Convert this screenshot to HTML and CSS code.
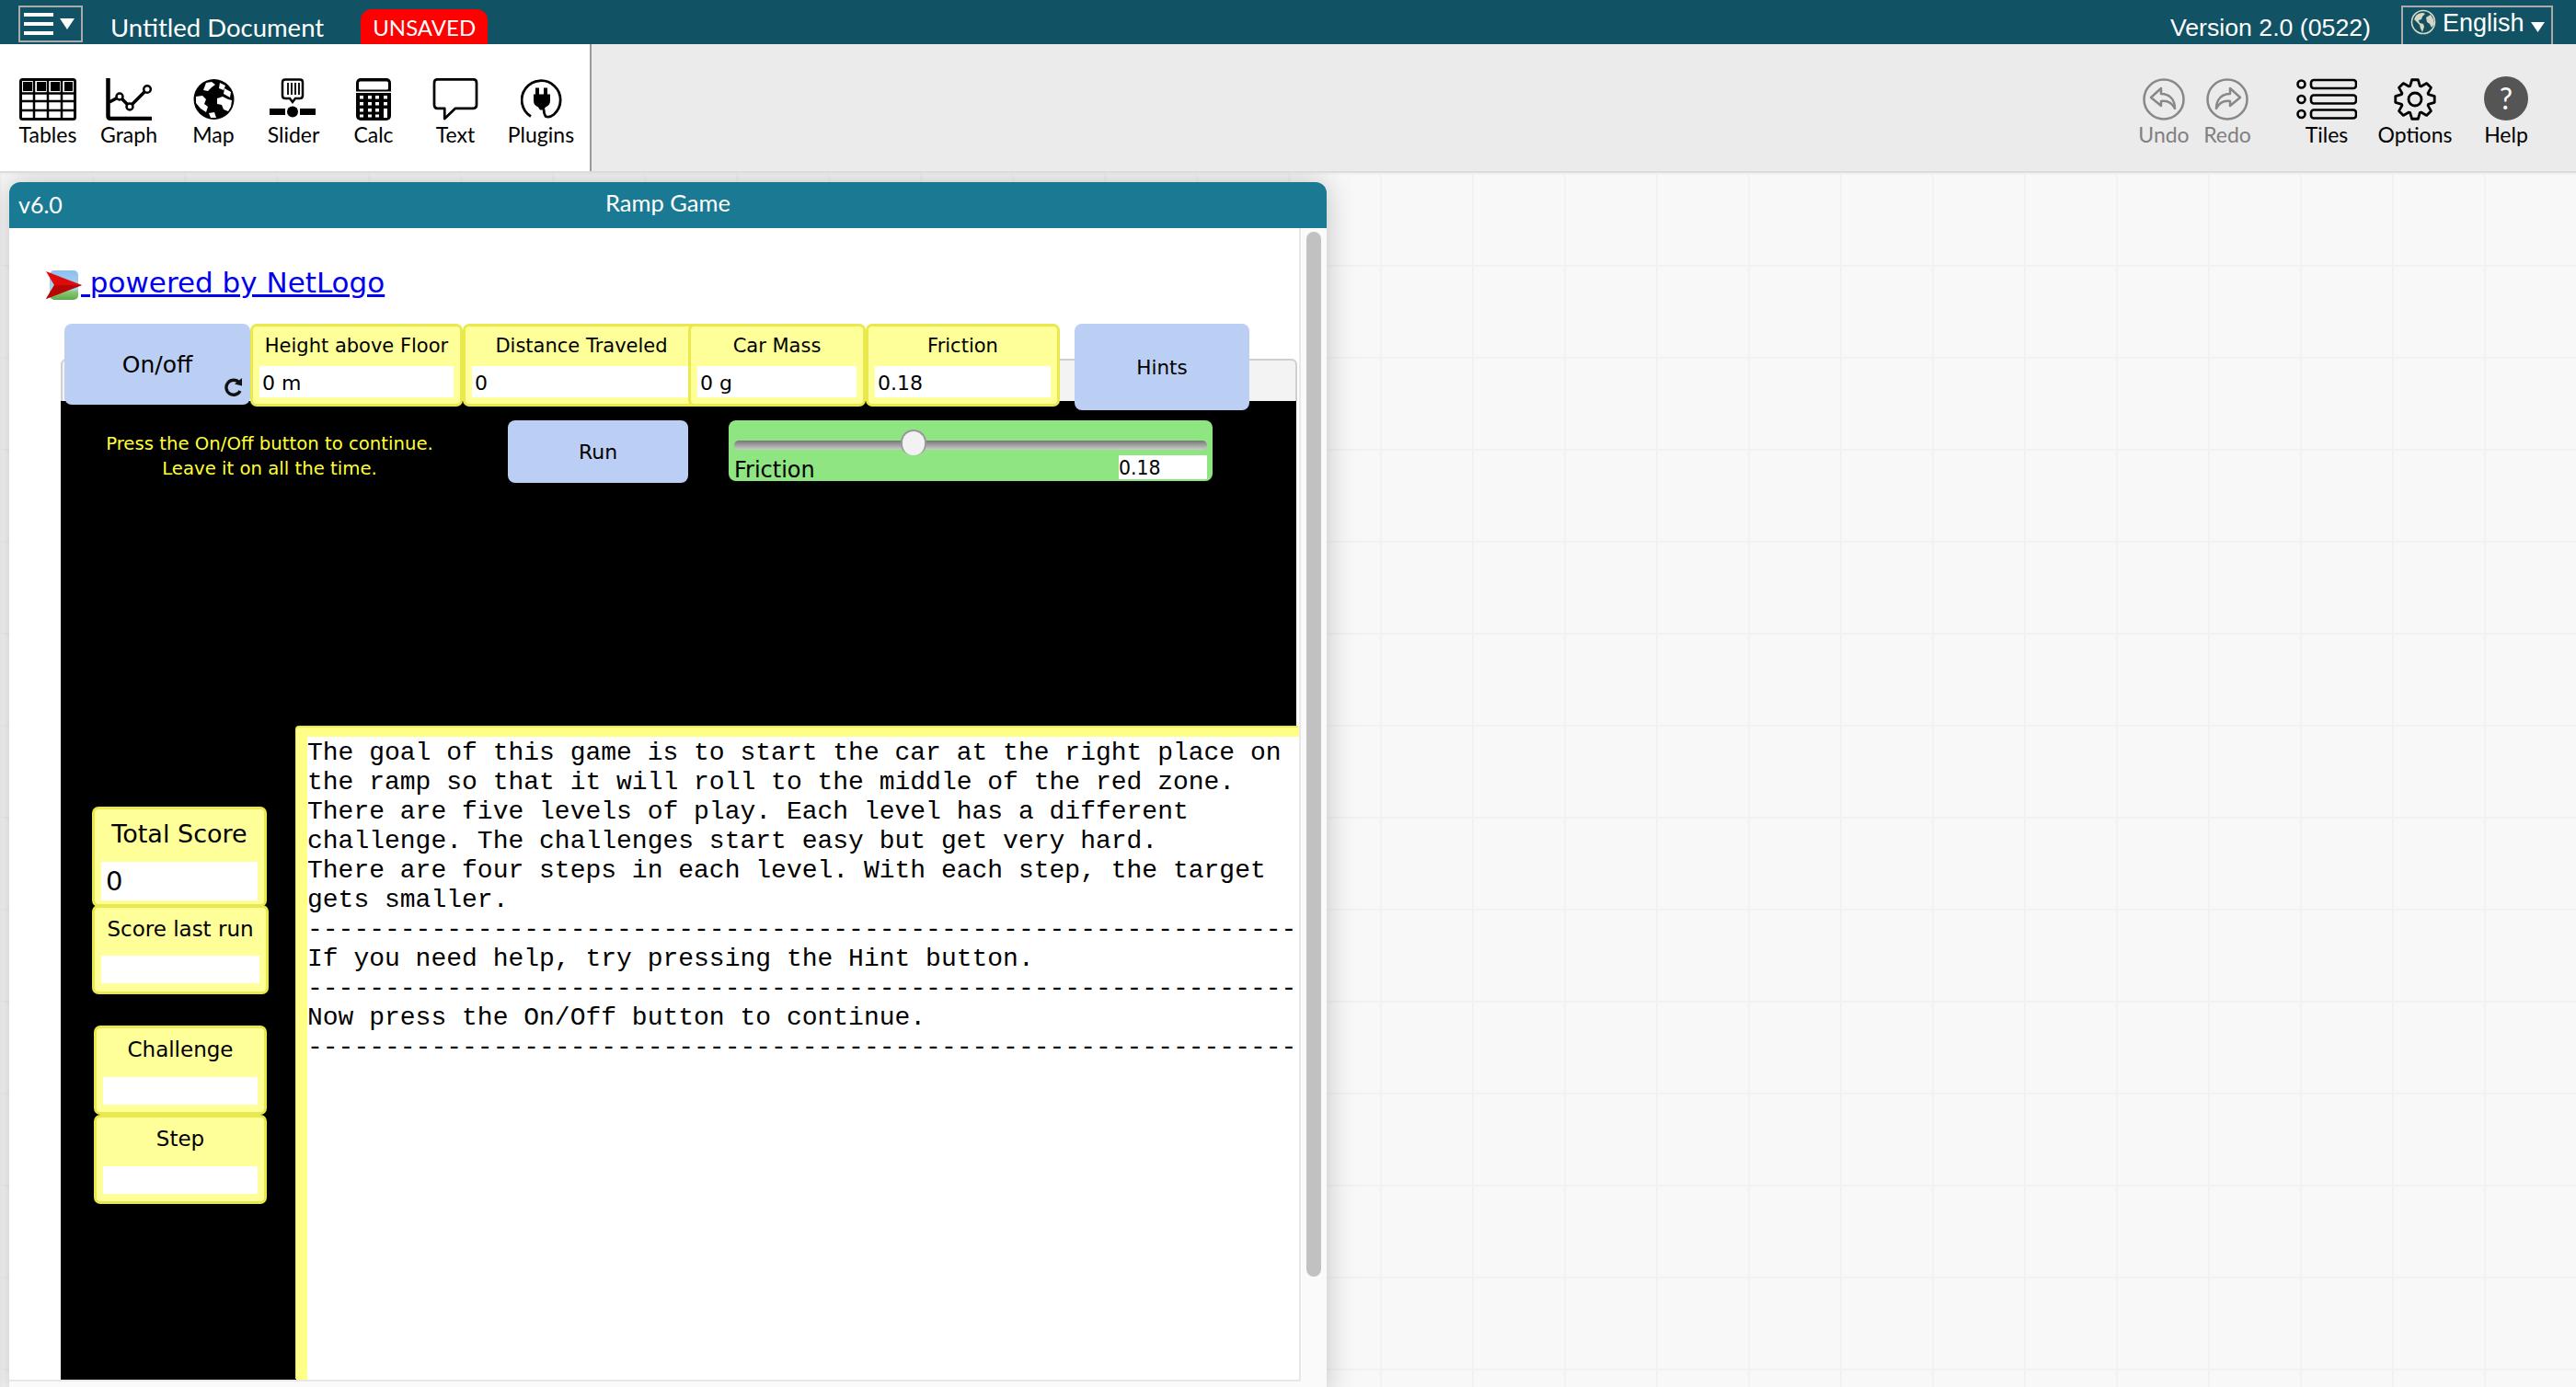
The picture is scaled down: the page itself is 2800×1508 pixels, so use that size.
FILE: index.html
```html
<!DOCTYPE html>
<html lang="en">
<head>
    <meta charset="UTF-8">
    <meta name="viewport" content="width=device-width, initial-scale=1.0">
    <title>Ramp Game</title>
    <link rel="stylesheet" href="styles.css">
</head>
<body>

<div class="topbar">
    <div class="menu-btn">
        <div class="bars"><span></span><span></span><span></span></div>
        <svg class="menu-caret" width="16" height="12" viewBox="0 0 16 12"><path d="M0 0H16L8 12Z" fill="#fff"/></svg>
    </div>
    <div class="doc-title">Untitled Document</div>
    <div class="unsaved">UNSAVED</div>
    <div class="version">Version 2.0 (0522)</div>
    <div class="lang">
        <svg width="28" height="28" viewBox="0 0 28 28" class="lang-globe">
            <circle cx="14" cy="14" r="12.5" fill="#11505f" stroke="#d6d6c6" stroke-width="1.6"/>
            <path d="M6 7C9 4 14 3 16 5L13 8 12 11 9 12 10 15 14 16 15 19 13 25 11 21 10 17 6 13 4 11Z" fill="#d6d6c6"/>
            <path d="M17 9L22 6 25 11 26 16 23 20 21 16 18 14Z" fill="#d6d6c6"/>
        </svg>
        <span>English</span>
        <svg width="15" height="11" viewBox="0 0 15 11"><path d="M0 0H15L7.5 11Z" fill="#fff"/></svg>
    </div>
</div>

<div class="toolbar">
    <div class="tools-left">
        <div class="tool">
            <svg width="62" height="46" viewBox="0 0 62 46">
                <rect x="1.5" y="1.5" width="59" height="43" rx="2" fill="#fff" stroke="#000" stroke-width="3"/>
                <path d="M2 16.5H60M2 25H60M2 35H60M16 2V44M31 2V44M46 2V44" stroke="#000" stroke-width="2.5"/>
                <path d="M4 4H14V14H4ZM19 4H29V14H19ZM34 4H44V14H34ZM49 4H58V14H49Z" fill="#000"/>
            </svg>
            <span>Tables</span>
        </div>
        <div class="tool">
            <svg width="50" height="46" viewBox="0 0 50 46">
                <path d="M2.5 0V41Q2.5 44 5.5 44H49" fill="none" stroke="#000" stroke-width="4.5" stroke-linecap="round"/>
                <path d="M4 26L15 20 26 31 45 12" fill="none" stroke="#000" stroke-width="3.5"/>
                <circle cx="15" cy="20" r="3.5" fill="#fff" stroke="#000" stroke-width="2.5"/>
                <circle cx="26" cy="31" r="3.5" fill="#fff" stroke="#000" stroke-width="2.5"/>
                <circle cx="45" cy="12" r="3.8" fill="#fff" stroke="#000" stroke-width="2.5"/>
            </svg>
            <span>Graph</span>
        </div>
        <div class="tool">
            <svg width="45" height="46" viewBox="0 0 45 46">
                <circle cx="22.5" cy="23" r="22" fill="#000"/>
                <path d="M14 5L20 4 24 7 20 10 16 14 11 13ZM29 5L35 8 33 13 28 11ZM34 11L41 15 40 21 33 17Z" fill="#fff"/>
                <path d="M3 20L10 19 14 23 12 28 16 31 14 37 8 33 3 27Z" fill="#fff"/>
                <path d="M26 22L32 20 38 23 42 24 41 31 38 36 33 34 31 29 26 28Z" fill="#fff"/>
                <path d="M17 38L23 37 25 43 19 43Z" fill="#fff"/>
            </svg>
            <span>Map</span>
        </div>
        <div class="tool">
            <svg width="52" height="46" viewBox="0 0 52 46">
                <path d="M17 1.5H33Q36 1.5 36 4.500V19Q36 22 33 22H28L25 26 22 22H17Q14 22 14 19V4.500Q14 1.500 17 1.500Z" fill="#fff" stroke="#000" stroke-width="2.5"/>
                <path d="M20 5V18M24 5V18M28 5V18M32 5V18" stroke="#000" stroke-width="1.8"/>
                <rect x="0" y="33" width="50" height="7" fill="#000"/>
                <rect x="17" y="30" width="16" height="13" fill="#fff"/>
                <circle cx="25" cy="36.500" r="6" fill="#000"/>
            </svg>
            <span>Slider</span>
        </div>
        <div class="tool">
            <svg width="38" height="46" viewBox="0 0 38 46">
                <rect width="38" height="46" rx="5" fill="#000"/>
                <rect x="3" y="3.500" width="32" height="9" rx="1.500" fill="#fff"/>
                <rect x="0" y="14.500" width="38" height="1.500" fill="#fff"/>
                <path d="M4 19h4v3.500H4zM13 19h4v3.500h-4zM21 19h4v3.500h-4zM30 19h4v3.500h-4zM4 26h4v3.500H4zM13 26h4v3.500h-4zM21 26h4v3.500h-4zM30 26h4v3.500h-4zM4 33h4v3.500H4zM13 33h4v3.500h-4zM21 33h4v3.500h-4zM4 39.500h4v3H4zM13 39.500h4v3h-4zM21 39.500h4v3h-4zM30 33h4v10h-4z" fill="#fff"/>
            </svg>
            <span>Calc</span>
        </div>
        <div class="tool">
            <svg width="50" height="47" viewBox="0 0 50 47">
                <path d="M5 1.500H45Q48.500 1.500 48.500 5V30Q48.500 33.500 45 33.500H25L13 45V33.500H5Q1.500 33.500 1.500 30V5Q1.500 1.500 5 1.500Z" fill="#fff" stroke="#000" stroke-width="2.800" stroke-linejoin="round"/>
            </svg>
            <span>Text</span>
        </div>
        <div class="tool">
            <svg width="45" height="45" viewBox="0 0 45 45">
                <path d="M11 41A21 21 0 1 1 36 39Q31 43 27 41Q25 38 25 33" fill="none" stroke="#000" stroke-width="2.800"/>
                <path d="M16 10H20V17H25V10H29V17H32V24Q32 29 27 31L25 34H21L19 31Q14 29 14 24V17H16Z" fill="#000"/>
            </svg>
            <span>Plugins</span>
        </div>
    </div>
    <div class="tools-right">
        <div class="tool tool-off">
            <svg width="46" height="46" viewBox="0 0 46 46">
                <circle cx="23" cy="23" r="21.500" fill="none" stroke="#888" stroke-width="2.500"/>
                <path d="M20 11L9 21 20 30V25C27 24 32 27 35 33 35 23 29 17 20 17Z" fill="none" stroke="#888" stroke-width="2.500" stroke-linejoin="round"/>
            </svg>
            <span>Undo</span>
        </div>
        <div class="tool tool-off">
            <svg width="46" height="46" viewBox="0 0 46 46">
                <circle cx="23" cy="23" r="21.500" fill="none" stroke="#888" stroke-width="2.500"/>
                <path d="M26 11L37 21 26 30V25C19 24 14 27 11 33 11 23 17 17 26 17Z" fill="none" stroke="#888" stroke-width="2.500" stroke-linejoin="round"/>
            </svg>
            <span>Redo</span>
        </div>
        <div class="tool tool-tiles">
            <svg width="66" height="46" viewBox="0 0 66 46">
                <circle cx="5.500" cy="6.500" r="4" fill="none" stroke="#000" stroke-width="2.600"/>
                <circle cx="5.500" cy="23" r="4" fill="none" stroke="#000" stroke-width="2.600"/>
                <circle cx="5.500" cy="39" r="4" fill="none" stroke="#000" stroke-width="2.600"/>
                <rect x="16" y="2" width="49" height="9" rx="3" fill="none" stroke="#000" stroke-width="2.600"/>
                <rect x="16" y="18.500" width="49" height="9" rx="3" fill="none" stroke="#000" stroke-width="2.600"/>
                <rect x="16" y="34.500" width="49" height="9" rx="3" fill="none" stroke="#000" stroke-width="2.600"/>
            </svg>
            <span>Tiles</span>
        </div>
        <div class="tool">
            <svg width="46" height="46" viewBox="0 0 46 46">
                <path d="M17.700 8.430L19.640 1.760H26.360L28.300 8.430 29.550 8.950 35.640 5.600 40.400 10.360 37.050 16.450 37.570 17.700 44.240 19.640V26.360L37.570 28.300 37.050 29.550 40.400 35.640 35.640 40.400 29.550 37.050 28.300 37.570 26.360 44.240H19.640L17.700 37.570 16.450 37.050 10.360 40.400 5.600 35.640 8.950 29.550 8.430 28.300 1.760 26.360V19.640L8.430 17.700 8.950 16.450 5.600 10.360 10.360 5.600 16.450 8.950Z" fill="none" stroke="#000" stroke-width="2.800" stroke-linejoin="round"/>
                <circle cx="23" cy="23" r="7" fill="none" stroke="#000" stroke-width="2.800"/>
            </svg>
            <span>Options</span>
        </div>
        <div class="tool">
            <div class="help-dot">?</div>
            <span>Help</span>
        </div>
    </div>
</div>

<div class="canvas">
    <div class="tile">
        <div class="tile-head">
            <span class="tile-ver">v6.0</span>
            <span class="tile-name">Ramp Game</span>
        </div>
        <div class="tile-body">
            <div class="page">
                <a class="nl-link" href="#">
                    <svg width="42" height="36" viewBox="0 0 42 36">
                        <defs>
                            <linearGradient id="nlbg" x1="0" y1="0" x2="0" y2="1">
                                <stop offset="0" stop-color="#8cc0f0"/>
                                <stop offset="0.65" stop-color="#a8d4f0"/>
                                <stop offset="0.72" stop-color="#88cc70"/>
                                <stop offset="1" stop-color="#60a850"/>
                            </linearGradient>
                        </defs>
                        <rect x="5" y="2" width="31" height="32" rx="5" fill="url(#nlbg)"/>
                        <path d="M1 3L40 18 1 33 10 18Z" fill="#e00a0a"/>
                        <path d="M1 33L40 18H10Z" fill="#b80606"/>
                    </svg><span> powered by NetLogo</span>
                </a>

                <div class="model">
                    <div class="view-head"></div>
                    <div class="top-row">
                        <div class="nl-btn btn-onoff">On/off
                            <svg class="forever" width="22" height="22" viewBox="0 0 22 22">
                                <path d="M17 6A8 8 0 1 0 18 15" fill="none" stroke="#111" stroke-width="3.400"/>
                                <path d="M12 7.500L20 9.500 20 1Z" fill="#111"/>
                            </svg>
                        </div>
                        <div class="monitor mon-height"><div class="mon-label">Height above Floor</div><div class="mon-value">0 m</div></div>
                        <div class="monitor mon-dist"><div class="mon-label">Distance Traveled</div><div class="mon-value">0</div></div>
                        <div class="monitor mon-mass"><div class="mon-label">Car Mass</div><div class="mon-value">0 g</div></div>
                        <div class="monitor mon-fric"><div class="mon-label">Friction</div><div class="mon-value">0.18</div></div>
                        <div class="nl-btn btn-hints">Hints</div>
                    </div>
                    <div class="world">
                        <div class="run-row">
                            <div class="notice">Press the On/Off button to continue.<br>Leave it on all the time.</div>
                            <div class="nl-btn btn-run">Run</div>
                            <div class="slider">
                                <div class="slider-track"><div class="slider-thumb"></div></div>
                                <div class="slider-foot">
                                    <span class="slider-name">Friction</span>
                                    <span class="slider-val">0.18</span>
                                </div>
                            </div>
                        </div>
                        <div class="lower">
                            <div class="side">
                                <div class="monitor mon-total"><div class="mon-label">Total Score</div><div class="mon-value">0</div></div>
                                <div class="monitor mon-last"><div class="mon-label">Score last run</div><div class="mon-value"></div></div>
                                <div class="monitor mon-small mon-chal"><div class="mon-label">Challenge</div><div class="mon-value"></div></div>
                                <div class="monitor mon-small"><div class="mon-label">Step</div><div class="mon-value"></div></div>
                            </div>
                            <pre class="output">The goal of this game is to start the car at the right place on
the ramp so that it will roll to the middle of the red zone.
There are five levels of play. Each level has a different
challenge. The challenges start easy but get very hard.
There are four steps in each level. With each step, the target
gets smaller.
----------------------------------------------------------------
If you need help, try pressing the Hint button.
----------------------------------------------------------------
Now press the On/Off button to continue.
----------------------------------------------------------------</pre>
                        </div>
                    </div>
                </div>
            </div>
            <div class="scroll-gutter"><div class="scroll-thumb"></div></div>
        </div>
    </div>
</div>

</body>
</html>
```

FILE: styles.css
```css
html, body {
    margin: 0;
    height: 1508px;
    overflow: hidden;
}
body {
    font-family: Lato, "Open Sans", sans-serif;
    background-color: #f8f8f8;
}

/* top bar */
.topbar {
    height: 48px;
    background-color: #115364;
    color: white;
    display: flex;
    align-items: flex-start;
    padding-left: 20px;
    padding-right: 25px;
    box-sizing: border-box;
}
.menu-btn {
    width: 70px;
    height: 40px;
    margin-top: 6px;
    border: 2px solid #aaa;
    box-sizing: border-box;
    display: flex;
    align-items: center;
    padding-left: 4px;
}
.bars span {
    display: block;
    width: 32px;
    height: 4px;
    margin: 6px 0;
    background-color: white;
}
.menu-caret {
    margin-left: 7px;
}
.doc-title {
    margin-left: 30px;
    margin-top: 14px;
    font-size: 27.5px;
    line-height: 32px;
}
.unsaved {
    margin-left: 40px;
    margin-top: 10px;
    width: 138px;
    height: 38px;
    background-color: #ff0000;
    border-radius: 12px 12px 0 0;
    text-align: center;
    font-size: 24px;
    line-height: 40px;
}
.version {
    margin-left: auto;
    margin-top: 12px;
    font-family: "Liberation Sans", sans-serif;
    font-size: 26.7px;
    line-height: 36px;
}
.lang {
    margin-left: 33px;
    margin-top: 6px;
    width: 165px;
    height: 42px;
    border: 2px solid #aaa;
    border-bottom: none;
    box-sizing: border-box;
    display: flex;
    align-items: center;
    padding-left: 8px;
    font-family: "Liberation Sans", sans-serif;
    font-size: 27px;
}
.lang-globe {
    margin-top: -8px;
}
.lang span {
    margin-left: 7px;
    margin-right: 7px;
    margin-top: -6px;
}
.lang svg:last-child {
    margin-top: 2px;
}

/* toolbar */
.toolbar {
    height: 140px;
    background-color: #ebebeb;
    border-bottom: 2px solid #dcdcdc;
    box-sizing: border-box;
    display: flex;
    justify-content: space-between;
}
.tools-left {
    width: 643px;
    height: 138px;
    background-color: white;
    border-right: 2px solid #999;
    box-sizing: border-box;
    padding-left: 8px;
    display: grid;
    grid-template-columns: 88px 88px 96px 78px 96px 82px 104px;
}
.tools-right {
    display: grid;
    grid-template-columns: 70px 68px 113px 114px 84px;
    padding-right: 34px;
}
.tool {
    display: flex;
    flex-direction: column;
    align-items: center;
    padding-top: 37px;
    font-size: 23px;
    color: #000;
}
.tool svg, .help-dot {
    height: 46px;
    flex-shrink: 0;
}
.tool span {
    margin-top: 1px;
    line-height: 28px;
}
.tool-off {
    color: #808080;
}
.tool-tiles {
    padding-left: 35px;
}
.help-dot {
    width: 48px;
    height: 48px;
    margin-top: -2px;
    background-color: #555;
    color: white;
    border-radius: 50%;
    font-size: 32px;
    line-height: 48px;
    text-align: center;
}

/* workspace */
.canvas {
    height: 1320px;
    overflow: hidden;
    padding: 10px 0 0 10px;
    box-sizing: border-box;
    background-color: #f8f8f8;
    background-image:
        linear-gradient(to right, #f2f2f2 2px, transparent 2px),
        linear-gradient(to bottom, #f2f2f2 2px, transparent 2px);
    background-size: 100px 100px;
}
.tile {
    width: 1432px;
    height: 1320px;
    border-radius: 12px 12px 0 0;
    box-shadow: 0 0 32px rgba(0, 0, 0, 0.22);
    background-color: #fafafa;
}
.tile-head {
    height: 50px;
    background-color: #1a7a93;
    border-radius: 12px 12px 0 0;
    color: white;
    font-size: 25px;
    display: flex;
    align-items: center;
    position: relative;
    padding-left: 10px;
}
.tile-ver {
    margin-top: -3px;
}
.tile-name {
    position: absolute;
    left: 0;
    right: 0;
    text-align: center;
    font-size: 25.5px;
    top: 7px;
}
.tile-body {
    display: flex;
    height: 1270px;
}
.page {
    width: 1404px;
    height: 1254px;
    background-color: white;
    border-right: 2px solid #e8e8e8;
    border-bottom: 2px solid #e8e8e8;
    box-sizing: border-box;
    font-family: "DejaVu Sans", sans-serif;
    overflow: hidden;
    padding-top: 44px;
}
.scroll-gutter {
    width: 28px;
    padding: 4px 6px 0;
    box-sizing: border-box;
}
.scroll-thumb {
    width: 16px;
    height: 1136px;
    background-color: #c1c1c1;
    border-radius: 8px;
}

/* link */
.nl-link {
    display: flex;
    align-items: center;
    margin-left: 39px;
    height: 36px;
    color: #0000ee;
    font-size: 31px;
    white-space: pre;
}
.nl-link span {
    margin-left: -3px;
    margin-top: -6px;
}

/* model */
.model {
    position: relative;
    margin-left: 56px;
    margin-top: 24px;
    width: 1347px;
}
.view-head {
    position: absolute;
    top: 38px;
    left: 0;
    width: 1344px;
    height: 46px;
    background-color: #f3f3f3;
    border: 2px solid #cfcfcf;
    border-bottom: none;
    border-radius: 6px 6px 0 0;
    box-sizing: border-box;
}
.top-row {
    position: relative;
    z-index: 2;
    display: flex;
    align-items: flex-start;
    padding-left: 4px;
    margin-bottom: -13px;
    height: 94px;
}
.nl-btn {
    background-color: #bacff3;
    border-radius: 8px;
    color: #000;
    font-size: 21.500px;
    display: flex;
    align-items: center;
    justify-content: center;
}
.btn-onoff {
    width: 202px;
    height: 88px;
    position: relative;
    box-sizing: border-box;
    font-size: 25px;
}
.forever {
    position: absolute;
    right: 7px;
    bottom: 8px;
}
.btn-hints {
    width: 190px;
    height: 94px;
    margin-left: 16px;
}
.monitor {
    background-color: #ffff99;
    border: 3px solid #e9e94d;
    border-radius: 7px;
    box-sizing: border-box;
    padding: 0 7px 7px;
    color: #000;
}
.mon-label {
    height: 43px;
    line-height: 43px;
    text-align: center;
    font-size: 21px;
    white-space: nowrap;
}
.mon-value {
    height: 34px;
    line-height: 37px;
    background-color: white;
    font-size: 22px;
    padding-left: 3px;
}
.mon-height { width: 231px; height: 90px; }
.mon-dist { width: 258px; height: 90px; margin-right: -13px; }
.mon-mass { width: 193px; height: 90px; position: relative; }
.mon-fric { width: 211px; height: 90px; }

/* black world area */
.world {
    width: 1343px;
    height: 1069px;
    background-color: black;
    box-sizing: border-box;
    padding-top: 24px;
}
.run-row {
    display: flex;
    align-items: flex-start;
    height: 68px;
}
.notice {
    width: 454px;
    margin-right: 32px;
    padding-top: 12px;
    text-align: center;
    color: #ffff33;
    font-size: 19.700px;
    line-height: 27px;
}
.btn-run {
    width: 196px;
    height: 68px;
    box-sizing: border-box;
    font-size: 22px;
}
.slider {
    width: 526px;
    height: 66px;
    margin-left: 44px;
    background-color: #8fe581;
    border-radius: 8px;
    padding: 0 6px;
    box-sizing: border-box;
    position: relative;
}
.slider-track {
    position: relative;
    height: 38px;
}
.slider-track::before {
    content: "";
    position: absolute;
    left: 0;
    right: 0;
    top: 22px;
    height: 10px;
    border-radius: 5px;
    background-image: linear-gradient(#777, #ccc);
}
.slider-thumb {
    position: absolute;
    left: 181px;
    top: 10px;
    width: 28px;
    height: 28px;
    border-radius: 50% 50% 45% 45%;
    background-color: #f2f2f2;
    border: 2px solid #999;
    border-bottom: none;
    box-sizing: border-box;
}
.slider-foot {
    display: flex;
    justify-content: space-between;
    align-items: flex-start;
    font-size: 24px;
    line-height: 26px;
}
.slider-name {
    margin-top: 3px;
    line-height: 26px;
}
.slider-val {
    width: 96px;
    height: 26px;
    background-color: white;
    font-size: 20.500px;
    line-height: 28px;
}
.lower {
    display: flex;
    margin-top: 264px;
    height: 712px;
}
.side {
    width: 256px;
    padding-left: 34px;
    padding-top: 88px;
    box-sizing: border-box;
    flex-shrink: 0;
}
.mon-total {
    width: 190px;
    height: 109px;
    padding-bottom: 4px;
}
.mon-total .mon-label {
    height: 57px;
    line-height: 53px;
    font-size: 27px;
}
.mon-total .mon-value {
    height: 42px;
    line-height: 42px;
    font-size: 29px;
    padding-left: 5px;
}
.mon-last {
    width: 192px;
    height: 97px;
    margin-top: -2px;
    position: relative;
}
.mon-last .mon-label {
    height: 52px;
    line-height: 46px;
    font-size: 23px;
}
.mon-last .mon-value, .mon-small .mon-value {
    height: 30px;
}
.mon-small {
    width: 188px;
    height: 97px;
    margin-left: 2px;
}
.mon-small .mon-label {
    height: 53px;
    line-height: 46px;
    font-size: 23px;
}
.mon-chal {
    margin-top: 34px;
}
.output {
    width: 1090px;
    height: 710px;
    margin: 2px 0 0;
    flex-shrink: 0;
    box-sizing: border-box;
    background-color: white;
    border-top: 10px solid #ffff88;
    border-left: 12px solid #ffff88;
    border-radius: 4px 0 0 0;
    box-shadow: -1px -2px 0 #e9e94d;
    padding-top: 2px;
    font-family: "Liberation Mono", monospace;
    font-size: 28px;
    line-height: 32px;
    color: #000;
    overflow: hidden;
}
```
